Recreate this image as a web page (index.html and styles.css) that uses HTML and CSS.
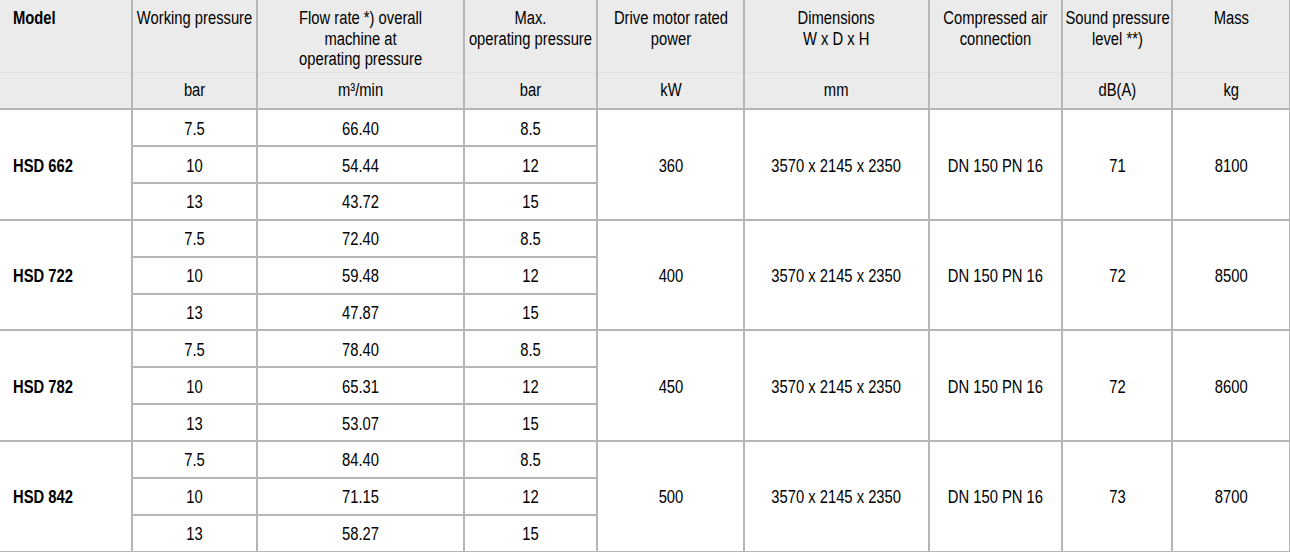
FILE: index.html
```html
<!DOCTYPE html>
<html>
<head>
<meta charset="utf-8">
<link rel="stylesheet" href="styles.css">
</head>
<body>
<table class="spec">
  <colgroup>
    <col class="c-model"><col class="c-wp"><col class="c-flow"><col class="c-max"><col class="c-power"><col class="c-dim"><col class="c-conn"><col class="c-sound"><col class="c-mass">
  </colgroup>
  <thead>
    <tr class="h-title">
      <th class="model"><span class="t">Model</span></th>
      <th><span class="t">Working pressure</span></th>
      <th><span class="t">Flow rate *) overall<br>machine at<br>operating pressure</span></th>
      <th><span class="t">Max.<br>operating pressure</span></th>
      <th><span class="t">Drive motor rated<br>power</span></th>
      <th><span class="t">Dimensions<br>W x D x H</span></th>
      <th><span class="t">Compressed air<br>connection</span></th>
      <th><span class="t">Sound pressure<br>level **)</span></th>
      <th><span class="t">Mass</span></th>
    </tr>
    <tr class="h-unit">
      <th class="model"></th>
      <th><span class="t">bar</span></th>
      <th><span class="t">m³/min</span></th>
      <th><span class="t">bar</span></th>
      <th><span class="t">kW</span></th>
      <th><span class="t">mm</span></th>
      <th></th>
      <th><span class="t">dB(A)</span></th>
      <th><span class="t">kg</span></th>
    </tr>
  </thead>
  <tbody>
    <tr><td class="model" rowspan="3"><span class="t">HSD 662</span></td><td><span class="t">7.5</span></td><td><span class="t">66.40</span></td><td><span class="t">8.5</span></td><td rowspan="3"><span class="t">360</span></td><td rowspan="3"><span class="t">3570 x 2145 x 2350</span></td><td rowspan="3"><span class="t">DN 150 PN 16</span></td><td rowspan="3"><span class="t">71</span></td><td rowspan="3"><span class="t">8100</span></td></tr>
    <tr><td><span class="t">10</span></td><td><span class="t">54.44</span></td><td><span class="t">12</span></td></tr>
    <tr><td><span class="t">13</span></td><td><span class="t">43.72</span></td><td><span class="t">15</span></td></tr>
    <tr><td class="model" rowspan="3"><span class="t">HSD 722</span></td><td><span class="t">7.5</span></td><td><span class="t">72.40</span></td><td><span class="t">8.5</span></td><td rowspan="3"><span class="t">400</span></td><td rowspan="3"><span class="t">3570 x 2145 x 2350</span></td><td rowspan="3"><span class="t">DN 150 PN 16</span></td><td rowspan="3"><span class="t">72</span></td><td rowspan="3"><span class="t">8500</span></td></tr>
    <tr><td><span class="t">10</span></td><td><span class="t">59.48</span></td><td><span class="t">12</span></td></tr>
    <tr><td><span class="t">13</span></td><td><span class="t">47.87</span></td><td><span class="t">15</span></td></tr>
    <tr><td class="model" rowspan="3"><span class="t">HSD 782</span></td><td><span class="t">7.5</span></td><td><span class="t">78.40</span></td><td><span class="t">8.5</span></td><td rowspan="3"><span class="t">450</span></td><td rowspan="3"><span class="t">3570 x 2145 x 2350</span></td><td rowspan="3"><span class="t">DN 150 PN 16</span></td><td rowspan="3"><span class="t">72</span></td><td rowspan="3"><span class="t">8600</span></td></tr>
    <tr><td><span class="t">10</span></td><td><span class="t">65.31</span></td><td><span class="t">12</span></td></tr>
    <tr><td><span class="t">13</span></td><td><span class="t">53.07</span></td><td><span class="t">15</span></td></tr>
    <tr><td class="model" rowspan="3"><span class="t">HSD 842</span></td><td><span class="t">7.5</span></td><td><span class="t">84.40</span></td><td><span class="t">8.5</span></td><td rowspan="3"><span class="t">500</span></td><td rowspan="3"><span class="t">3570 x 2145 x 2350</span></td><td rowspan="3"><span class="t">DN 150 PN 16</span></td><td rowspan="3"><span class="t">73</span></td><td rowspan="3"><span class="t">8700</span></td></tr>
    <tr><td><span class="t">10</span></td><td><span class="t">71.15</span></td><td><span class="t">12</span></td></tr>
    <tr><td><span class="t">13</span></td><td><span class="t">58.27</span></td><td><span class="t">15</span></td></tr>
  </tbody>
</table>
</body>
</html>
```
FILE: styles.css
```css
html, body {
  margin: 0;
  padding: 0;
  background: #ffffff;
}

.spec {
  border-collapse: collapse;
  table-layout: fixed;
  width: 1290px;
  font-family: "Liberation Sans", Arial, sans-serif;
  font-size: 18px;
  color: #000000;
}

.c-model { width: 132px; }
.c-wp { width: 125px; }
.c-flow { width: 207px; }
.c-max { width: 133px; }
.c-power { width: 147px; }
.c-dim { width: 185px; }
.c-conn { width: 133px; }
.c-sound { width: 110px; }
.c-mass { width: 118px; }

.spec th,
.spec td {
  border: 2px solid #b6b6b6;
  padding: 0 2px;
  text-align: center;
  white-space: nowrap;
}

/* condensed text: the reference uses a narrow sans face */
.t {
  display: block;
  width: 121.95%;
  margin-left: -10.975%;
  transform: scaleX(0.82);
  transform-origin: 50% 50%;
}

.spec .model .t {
  margin-left: 0;
  transform-origin: 0 50%;
}

.spec th {
  background: #ebebeb;
  font-weight: normal;
  line-height: 20.5px;
}

.h-title {
  height: 72.4px;
}

.h-title th {
  vertical-align: top;
  padding-top: 8px;
  border-top: none;
  border-bottom: 1px solid #e3e3e3;
}

.h-unit {
  height: 36.9px;
}

.h-unit th {
  vertical-align: middle;
  border-top: 1px solid #e3e3e3;
}

.spec .model {
  border-left: none;
  text-align: left;
  padding-left: 13px;
  font-weight: bold;
}

.spec tbody tr {
  height: 36.87px;
}

.spec td {
  vertical-align: middle;
  line-height: 20px;
  padding-top: 2px;
}
```
